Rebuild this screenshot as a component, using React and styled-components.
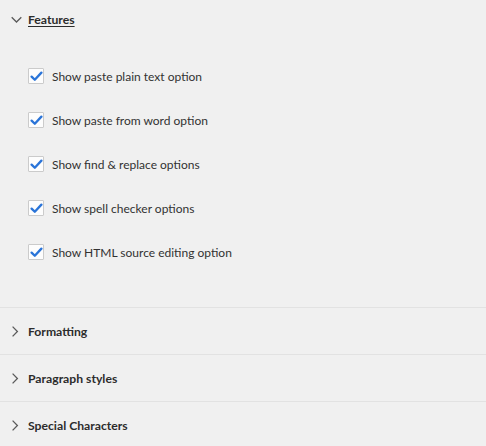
import React, { useState } from "react";
import styled, { createGlobalStyle } from "styled-components";

const GlobalStyle = createGlobalStyle`
  html, body {
    margin: 0;
    padding: 0;
    background: #f0f0f0;
  }
  body {
    font-family: Lato, "Open Sans", sans-serif;
    color: #2c2c2c;
  }
`;

const Panel = styled.div`
  width: 486px;
  height: 446px;
  overflow: hidden;
  background: #f0f0f0;
`;

const Item = styled.section`
  border-bottom: 1px solid #e2e2e2;

  &:last-child {
    border-bottom: none;
  }
`;

const Header = styled.button`
  display: flex;
  align-items: center;
  gap: 6px;
  width: 100%;
  height: ${(p) => (p.$first ? "38px" : "46px")};
  padding: 0 0 0 11px;
  border: none;
  background: transparent;
  font-family: inherit;
  font-size: 12.2px;
  font-weight: 700;
  color: #2c2c2c;
  cursor: pointer;
  text-align: left;
`;

const Title = styled.span`
  text-decoration: ${(p) => (p.$open ? "underline" : "none")};
  text-underline-offset: 2px;
  text-decoration-thickness: 1px;
`;

const Chevron = styled.svg`
  flex: none;
  width: 11px;
  height: 11px;
  color: #5a5a5a;
`;

const Content = styled.div`
  display: flex;
  flex-direction: column;
  padding: 16px 0 33px 28px;
`;

const Row = styled.label`
  display: flex;
  align-items: center;
  gap: 8px;
  height: 44px;
  font-size: 12px;
  color: #323232;
  cursor: pointer;
`;

const Box = styled.span`
  flex: none;
  display: flex;
  align-items: center;
  justify-content: center;
  width: 16px;
  height: 16px;
  box-sizing: border-box;
  border: 1px solid #cbcbcb;
  border-radius: 1px;
  background: #fdfdfd;
`;

const ChevronDown = () => (
  <Chevron viewBox="0 0 11 11">
    <path d="M0.7 3.2 L5.5 8 L10.3 3.2" fill="none" stroke="currentColor" strokeWidth="1.3" />
  </Chevron>
);

const ChevronRight = () => (
  <Chevron viewBox="0 0 11 11">
    <path d="M1.6 0.6 L6.4 5.5 L1.6 10.4" fill="none" stroke="currentColor" strokeWidth="1.3" />
  </Chevron>
);

const Check = ({ checked, onToggle, children }) => (
  <Row onClick={onToggle}>
    <Box>
      {checked && (
        <svg width="13" height="11" viewBox="0 0 13 11">
          <path
            d="M1.6 5.6 L4.8 8.8 L11.4 1.6"
            fill="none"
            stroke="#2a74d8"
            strokeWidth="2.3"
            strokeLinecap="round"
            strokeLinejoin="round"
          />
        </svg>
      )}
    </Box>
    {children}
  </Row>
);

const options = [
  "Show paste plain text option",
  "Show paste from word option",
  "Show find & replace options",
  "Show spell checker options",
  "Show HTML source editing option",
];

const sections = ["Features", "Formatting", "Paragraph styles", "Special Characters"];

export default function App() {
  const [open, setOpen] = useState("Features");
  const [checked, setChecked] = useState(options.map(() => true));

  return (
    <Panel>
      <GlobalStyle />
      {sections.map((name, i) => {
        const isOpen = open === name;
        return (
          <Item key={name}>
            <Header $first={i === 0} onClick={() => setOpen(isOpen ? null : name)}>
              {isOpen ? <ChevronDown /> : <ChevronRight />}
              <Title $open={isOpen}>{name}</Title>
            </Header>
            {isOpen && name === "Features" && (
              <Content>
                {options.map((label, j) => (
                  <Check
                    key={label}
                    checked={checked[j]}
                    onToggle={(e) => {
                      e.preventDefault();
                      setChecked((c) => c.map((v, k) => (k === j ? !v : v)));
                    }}
                  >
                    {label}
                  </Check>
                ))}
              </Content>
            )}
          </Item>
        );
      })}
    </Panel>
  );
}
